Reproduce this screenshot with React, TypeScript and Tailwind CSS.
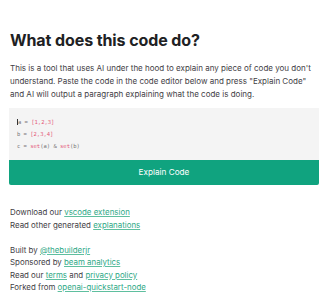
export default function App() {
  const font = { fontFamily: "Inter, 'Noto Sans', sans-serif" };
  const link = "text-[#2ea886] underline decoration-[#5fbf9f] underline-offset-[1px]";
  return (
    <div className="w-[328px] h-[300px] bg-white overflow-hidden" style={font}>
      <div className="px-[10px] pt-[30px]">
        <h1 className="text-[16px] leading-[20px] font-bold text-[#202123] tracking-[-0.1px]">What does this code do?</h1>
        <p className="mt-[11.5px] text-[8px] leading-[13px] text-[#3f4045]">
          This is a tool that uses AI under the hood to explain any piece of code you don't understand. Paste the code in the code editor below and press "Explain Code" and AI will output a paragraph explaining what the code is doing.
        </p>
      </div>
      <div className="mx-[9px] mt-[7.5px]">
        <div className="bg-[#f4f4f4] h-[52px] pl-[8px] pt-[8px] text-[5.5px] leading-[12px] text-[#777]" style={{ fontFamily: "'DejaVu Sans Mono', monospace" }}>
          <div><span className="border-l border-[#333]">a</span> = <span className="text-[#e45a7a]">[1,2,3]</span></div>
          <div>b = <span className="text-[#e45a7a]">[2,3,4]</span></div>
          <div>c = <span className="text-[#e45a7a]">set</span>(a) &amp; <span className="text-[#e45a7a]">set</span>(b)</div>
        </div>
        <button className="w-full h-[25px] bg-[#10a37f] text-white text-[8.2px] rounded-b-[2px] flex items-center justify-center">Explain Code</button>
      </div>
      <div className="px-[10px] mt-[21px] text-[7.9px] leading-[12.5px] text-[#3f4045]">
        <div>Download our <span className={link}>vscode extension</span></div>
        <div>Read other generated <span className={link}>explanations</span></div>
        <div className="h-[12.5px]" />
        <div>Built by <span className={link}>@thebuilderjr</span></div>
        <div>Sponsored by <span className={link}>beam analytics</span></div>
        <div>Read our <span className={link}>terms</span> and <span className={link}>privacy policy</span></div>
        <div>Forked from <span className={link}>openai-quickstart-node</span></div>
      </div>
    </div>
  );
}
